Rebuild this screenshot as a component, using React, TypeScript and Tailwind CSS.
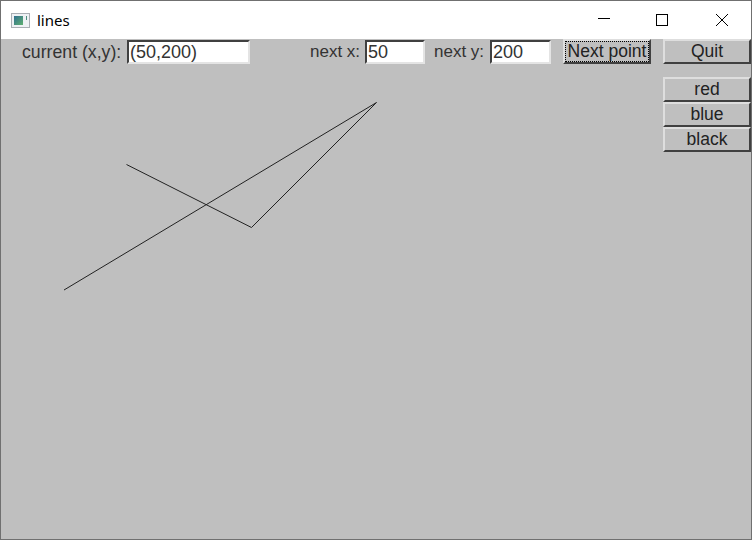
const font = { fontFamily: '"Liberation Sans", Arial, sans-serif' }

function Field({ value, width }: { value: string; width: string }) {
  return (
    <div
      className={`${width} h-[24px] pl-px bg-white border-2 border-t-[#404040] border-l-[#404040] border-r-[#e4e4e4] border-b-[#e4e4e4] text-[18px] leading-[20px] text-[#333]`}
    >
      {value}
    </div>
  )
}

function TkButton({ label, focus }: { label: string; focus?: boolean }) {
  return (
    <div className="h-[25px] bg-[#bfbfbf] border-2 border-t-[#dedede] border-l-[#dedede] border-r-[#404040] border-b-[#404040] flex items-center justify-center text-[17.5px] leading-none text-[#222]">
      {focus ? (
        <span className="border border-dotted border-black w-full h-full flex items-center justify-center">{label}</span>
      ) : (
        label
      )}
    </div>
  )
}

export default function App() {
  return (
    <div className="w-[752px] h-[540px] flex flex-col border border-[#707070] bg-[#bfbfbf] overflow-hidden" style={font}>
      {/* title bar */}
      <div className="h-[38px] bg-white flex items-center shrink-0">
        <svg width="19" height="15" viewBox="0 0 19 15" className="ml-[10px]">
          <defs>
            <linearGradient id="ic" x1="0" y1="0" x2="1" y2="1">
              <stop offset="0" stopColor="#2f6f8f" />
              <stop offset="1" stopColor="#5fb070" />
            </linearGradient>
          </defs>
          <rect x="0.5" y="0.5" width="18" height="14" fill="#eef1f4" stroke="#a9aeb4" />
          <rect x="3" y="3" width="9" height="9" fill="url(#ic)" />
          <rect x="15" y="3" width="1" height="4" fill="#4f9080" />
        </svg>
        <span className="ml-[7px] text-[15px] text-black" style={{ fontFamily: '"Noto Sans", sans-serif' }}>lines</span>
        <div className="ml-auto flex items-center text-black">
          <svg width="14" height="14" viewBox="0 0 14 14" className="mr-[44px]">
            <path d="M1 5.5H13" stroke="black" strokeWidth="1" />
          </svg>
          <svg width="14" height="14" viewBox="0 0 14 14" className="mr-[46px]">
            <rect x="1.5" y="1.5" width="11" height="11" fill="none" stroke="black" strokeWidth="1" />
          </svg>
          <svg width="14" height="14" viewBox="0 0 14 14" className="mr-[22px]">
            <path d="M1 1L13 13M13 1L1 13" stroke="black" strokeWidth="1" />
          </svg>
        </div>
      </div>

      {/* canvas + controls */}
      <div className="relative flex-1 flex">
        <svg className="absolute left-0 top-0" width="750" height="501">
          <polyline points="63,251 375.5,63.5 250.5,188.5 125.5,125.5" fill="none" stroke="#222" strokeWidth="1" />
        </svg>
        <div className="relative flex-1 flex items-start pt-px pl-[21px] text-[17px] leading-[24px] text-[#333]">
          <span className="w-[105px] text-[17.7px]">current (x,y):</span>
          <Field value="(50,200)" width="w-[123px]" />
          <span className="ml-[60px] w-[55px]">next x:</span>
          <Field value="50" width="w-[60px]" />
          <span className="ml-[9px] w-[56px]">next y:</span>
          <Field value="200" width="w-[61px]" />
          <div className="ml-[12px] w-[88px] -mt-px"><TkButton label="Next point" focus /></div>
        </div>
        <div className="relative w-[88px] flex flex-col">
          <TkButton label="Quit" />
          <div className="h-[13px]" />
          <TkButton label="red" />
          <TkButton label="blue" />
          <TkButton label="black" />
        </div>
      </div>
    </div>
  )
}
